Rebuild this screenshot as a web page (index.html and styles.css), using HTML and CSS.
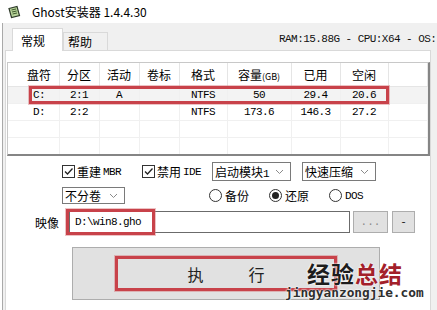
FILE: index.html
```html
<!DOCTYPE html>
<html lang="zh-CN">
<head>
    <meta charset="UTF-8">
    <title>Ghost安装器 1.4.4.30</title>
    <link rel="stylesheet" href="styles.css">
</head>
<body>
    <div class="window">
        <div class="titlebar">
            <svg class="app-icon" width="14" height="14" viewBox="0 0 14 14">
                <path d="M2 3.5 L10 1.5 L12.5 10.5 L4.5 12.5 Z" fill="#b8d49a" stroke="#2e3a2a" stroke-width="1.2"/>
                <path d="M4.5 5 L9 4 M5 7 L9.6 6 M5.6 9 L10 8" stroke="#3d5a2c" stroke-width="1"/>
            </svg>
            <span class="title">Ghost安装器 1.4.4.30</span>
        </div>

        <div class="frame">
            <div class="tabbar">
                <div class="tab tab-active">常规</div>
                <div class="tab">帮助</div>
                <div class="sysinfo">RAM:15.88G - CPU:X64 - OS:</div>
            </div>

            <div class="panel">
                <div class="list">
                    <table>
                        <colgroup>
                            <col style="width:11px"><col style="width:40px"><col style="width:40px">
                            <col style="width:40px"><col style="width:40px"><col style="width:48px">
                            <col style="width:64px"><col style="width:49px"><col style="width:48px"><col>
                        </colgroup>
                        <thead>
                            <tr>
                                <th></th><th>盘符</th><th>分区</th><th>活动</th><th>卷标</th>
                                <th>格式</th><th>容量<small>(GB)</small></th><th>已用</th><th>空闲</th><th></th>
                            </tr>
                        </thead>
                        <tbody>
                            <tr class="row-sel">
                                <td></td><td>C:</td><td>2:1</td><td>A</td><td></td>
                                <td>NTFS</td><td>50</td><td>29.4</td><td>20.6</td><td></td>
                            </tr>
                            <tr>
                                <td></td><td>D:</td><td>2:2</td><td></td><td></td>
                                <td>NTFS</td><td>173.6</td><td>146.3</td><td>27.2</td><td></td>
                            </tr>
                            <tr><td></td><td></td><td></td><td></td><td></td><td></td><td></td><td></td><td></td><td></td></tr>
                            <tr><td></td><td></td><td></td><td></td><td></td><td></td><td></td><td></td><td></td><td></td></tr>
                        </tbody>
                    </table>
                    <div class="mark mark-row"></div>
                </div>

                <div class="opt-row opt-row1">
                    <label class="check check-mbr">
                        <span class="box"><svg width="11" height="11" viewBox="0 0 11 11"><path d="M2 5.5 L4.5 8 L9.5 2.5" fill="none" stroke="#222" stroke-width="1.3"/></svg></span>
                        <span>重建</span><span class="mono">MBR</span>
                    </label>
                    <label class="check check-ide">
                        <span class="box"><svg width="11" height="11" viewBox="0 0 11 11"><path d="M2 5.5 L4.5 8 L9.5 2.5" fill="none" stroke="#222" stroke-width="1.3"/></svg></span>
                        <span>禁用</span><span class="mono">IDE</span>
                    </label>
                    <div class="select select-boot">
                        <span>启动模块<span class="mono">1</span></span>
                        <svg class="chev" width="9" height="6" viewBox="0 0 9 6"><path d="M1 1 L4.5 4.5 L8 1" fill="none" stroke="#8a8a8a" stroke-width="1"/></svg>
                    </div>
                    <div class="select select-zip">
                        <span>快速压缩</span>
                        <svg class="chev" width="9" height="6" viewBox="0 0 9 6"><path d="M1 1 L4.5 4.5 L8 1" fill="none" stroke="#8a8a8a" stroke-width="1"/></svg>
                    </div>
                </div>

                <div class="opt-row opt-row2">
                    <div class="select select-split">
                        <span>不分卷</span>
                        <svg class="chev" width="9" height="6" viewBox="0 0 9 6"><path d="M1 1 L4.5 4.5 L8 1" fill="none" stroke="#8a8a8a" stroke-width="1"/></svg>
                    </div>
                    <label class="radio radio-backup"><span class="dot"></span><span>备份</span></label>
                    <label class="radio radio-restore"><span class="dot dot-on"></span><span>还原</span></label>
                    <label class="radio radio-dos"><span class="dot"></span><span class="mono">DOS</span></label>
                </div>

                <div class="image-row">
                    <span class="image-label">映像</span>
                    <div class="image-field">
                        <div class="input mono">D:\win8.gho</div>
                        <div class="mark mark-input"></div>
                    </div>
                    <button class="btn btn-browse">...</button>
                    <button class="btn btn-minus">-</button>
                </div>

                <button class="run">
                    <span class="run-mark">
                        <span>执</span><span>行</span>
                    </span>
                </button>
            </div>
        </div>

        <div class="watermark">
            <div class="wm-cn"><span>经验</span><span class="wm-red">总结</span></div>
            <div class="wm-en">jingyanzongjie.com</div>
        </div>
    </div>
</body>
</html>
```

FILE: styles.css
```css
body {
    margin: 0;
    background: #f0f0f0;
    font-family: "Noto Sans CJK SC", "Noto Sans", sans-serif;
    font-size: 12px;
    color: #000;
}

.window {
    position: relative;
    width: 437px;
    height: 310px;
    overflow: hidden;
    background: #fff;
}

.mono {
    font-family: "Liberation Mono", "Noto Sans CJK SC", monospace;
    font-size: 11px;
    letter-spacing: -0.6px;
}

/* title bar */
.titlebar {
    height: 23px;
    display: flex;
    align-items: center;
    padding-left: 7px;
    gap: 11px;
}

.title {
    font-size: 12px;
    line-height: 14px;
}

/* window body */
.frame {
    height: 287px;
    margin-left: 2px;
    background: #f0f0f0;
    border-left: 1px solid #a9a9a9;
    overflow: hidden;
}

.tabbar {
    height: 27px;
    display: flex;
    align-items: flex-end;
    padding-left: 9px;
}

.tab {
    flex-shrink: 0;
    height: 18px;
    width: 45px;
    box-sizing: border-box;
    padding-left: 4px;
    border: 1px solid #d9d9d9;
    border-bottom: none;
    display: flex;
    align-items: center;
    font-size: 12px;
    white-space: nowrap;
    background: #f0f0f0;
}

.tab-active {
    height: 23px;
    width: 51px;
    padding-left: 8px;
    margin-bottom: -1px;
    background: #fff;
    position: relative;
    z-index: 1;
}

.sysinfo {
    margin-left: 171px;
    align-self: center;
    padding-top: 4px;
    white-space: nowrap;
    flex-shrink: 0;
    font-family: "Liberation Mono", monospace;
    font-size: 11px;
    letter-spacing: -0.55px;
    color: #111;
}

.panel {
    width: 426px;
    height: 262px;
    margin-left: 2px;
    box-sizing: border-box;
    background: #fff;
    border: 1px solid #d9d9d9;
}

/* partition list */
.list {
    position: relative;
    width: 423px;
    height: 94px;
    margin: 11px 0 0 1px;
    box-sizing: border-box;
    border-top: 1px solid #c8c8c8;
    border-left: 1px solid #c8c8c8;
    border-right: 2px solid #858585;
    border-bottom: 2px solid #858585;
    overflow: hidden;
}

.list table {
    width: 100%;
    table-layout: fixed;
    border-collapse: collapse;
}

.list th {
    height: 23px;
    padding: 0;
    font-weight: normal;
    font-size: 12px;
    text-align: center;
    border-right: 1px solid #e5e5e5;
    border-bottom: 1px solid #e5e5e5;
}

.list th small {
    font-size: 9px;
}

.list td {
    height: 16px;
    padding: 0;
    text-align: center;
    font-family: "Liberation Mono", monospace;
    font-size: 11px;
    letter-spacing: -0.6px;
    border-right: 1px solid #f0f0f0;
    border-bottom: 1px solid #f0f0f0;
}

.list th:first-child, .list td:first-child {
    border-right-color: transparent;
}

.row-sel td {
    background: #f3f3f3;
}

.mark {
    position: absolute;
    box-sizing: border-box;
    border: 3px solid #c8424a;
    box-shadow: 0 0 0 1px rgba(214, 120, 124, 0.45);
}

.mark-row {
    left: 21px;
    top: 23px;
    width: 360px;
    height: 18px;
}

/* options */
.opt-row {
    display: flex;
    align-items: center;
}

.opt-row1 {
    height: 19px;
    margin: 6px 0 0 56px;
}

.opt-row2 {
    height: 17px;
    margin: 6px 0 0 56px;
}

.check {
    display: flex;
    align-items: center;
    gap: 2px;
}

.check-mbr {
    width: 80px;
}

.check-ide {
    width: 70px;
}

.box {
    width: 13px;
    height: 13px;
    box-sizing: border-box;
    border: 1px solid #333;
    display: flex;
    align-items: center;
    justify-content: center;
    background: #fff;
}

.select {
    height: 19px;
    box-sizing: border-box;
    border: 1px solid #7a7a7a;
    display: flex;
    align-items: center;
    justify-content: space-between;
    padding: 0 6px 0 2px;
    background: #fff;
}

.select-boot {
    width: 79px;
}

.select-zip {
    width: 74px;
    margin-left: 11px;
}

.select-split {
    width: 63px;
    height: 17px;
}

.radio {
    display: flex;
    align-items: center;
    gap: 3px;
    margin-left: 20px;
}

.radio-backup {
    margin-left: 84px;
}

.dot {
    width: 13px;
    height: 13px;
    box-sizing: border-box;
    border: 1px solid #333;
    border-radius: 50%;
    display: flex;
    align-items: center;
    justify-content: center;
}

.dot-on::after {
    content: "";
    width: 7px;
    height: 7px;
    border-radius: 50%;
    background: #222;
}

/* image path row */
.image-row {
    display: flex;
    align-items: center;
    height: 22px;
    margin: 7px 0 0 29px;
}

.image-label {
    width: 34px;
}

.image-field {
    position: relative;
}

.input {
    width: 281px;
    height: 22px;
    box-sizing: border-box;
    border: 1px solid #6b6b6b;
    padding-left: 5px;
    display: flex;
    align-items: center;
}

.mark-input {
    left: -3px;
    top: -2px;
    width: 89px;
    height: 26px;
}

.btn {
    height: 22px;
    padding: 0;
    box-sizing: border-box;
    background: #e1e1e1;
    border: 1px solid #adadad;
    font-family: "Liberation Mono", monospace;
    font-size: 11px;
}

.btn-browse {
    width: 35px;
    margin-left: 3px;
    color: #8a8a8a;
}

.btn-minus {
    width: 23px;
    margin-left: 4px;
    color: #222;
}

/* run button */
.run {
    display: flex;
    align-items: center;
    justify-content: center;
    width: 308px;
    height: 53px;
    margin: 14px 0 0 66px;
    padding: 0;
    box-sizing: border-box;
    background: #e1e1e1;
    border: 1px solid #adadad;
}

.run-mark {
    width: 222px;
    height: 35px;
    box-sizing: border-box;
    border: 3px solid #c8424a;
    box-shadow: 0 0 0 1px rgba(214, 120, 124, 0.45);
    display: flex;
    align-items: center;
    justify-content: center;
    gap: 45px;
    font-family: "Noto Sans CJK SC", sans-serif;
    font-size: 16px;
    color: #222;
}

/* watermark */
.watermark {
    position: absolute;
    left: 285px;
    top: 262px;
    width: 140px;
}

.wm-cn {
    padding-left: 22px;
    font-family: "Noto Sans CJK SC", sans-serif;
    font-weight: bold;
    font-size: 23px;
    line-height: 23px;
    letter-spacing: 1px;
    color: #1d1d1d;
    text-shadow: 0 0 2px #fff, 0 0 2px #fff;
}

.wm-red {
    color: #a3202a;
}

.wm-en {
    margin-top: 2px;
    font-family: "DejaVu Sans Mono", monospace;
    font-weight: bold;
    font-size: 12.8px;
    line-height: 12px;
    color: #2f2f2f;
    text-shadow: 0 0 2px #fff, 0 0 2px #fff, 0 0 1px #fff;
}
```
